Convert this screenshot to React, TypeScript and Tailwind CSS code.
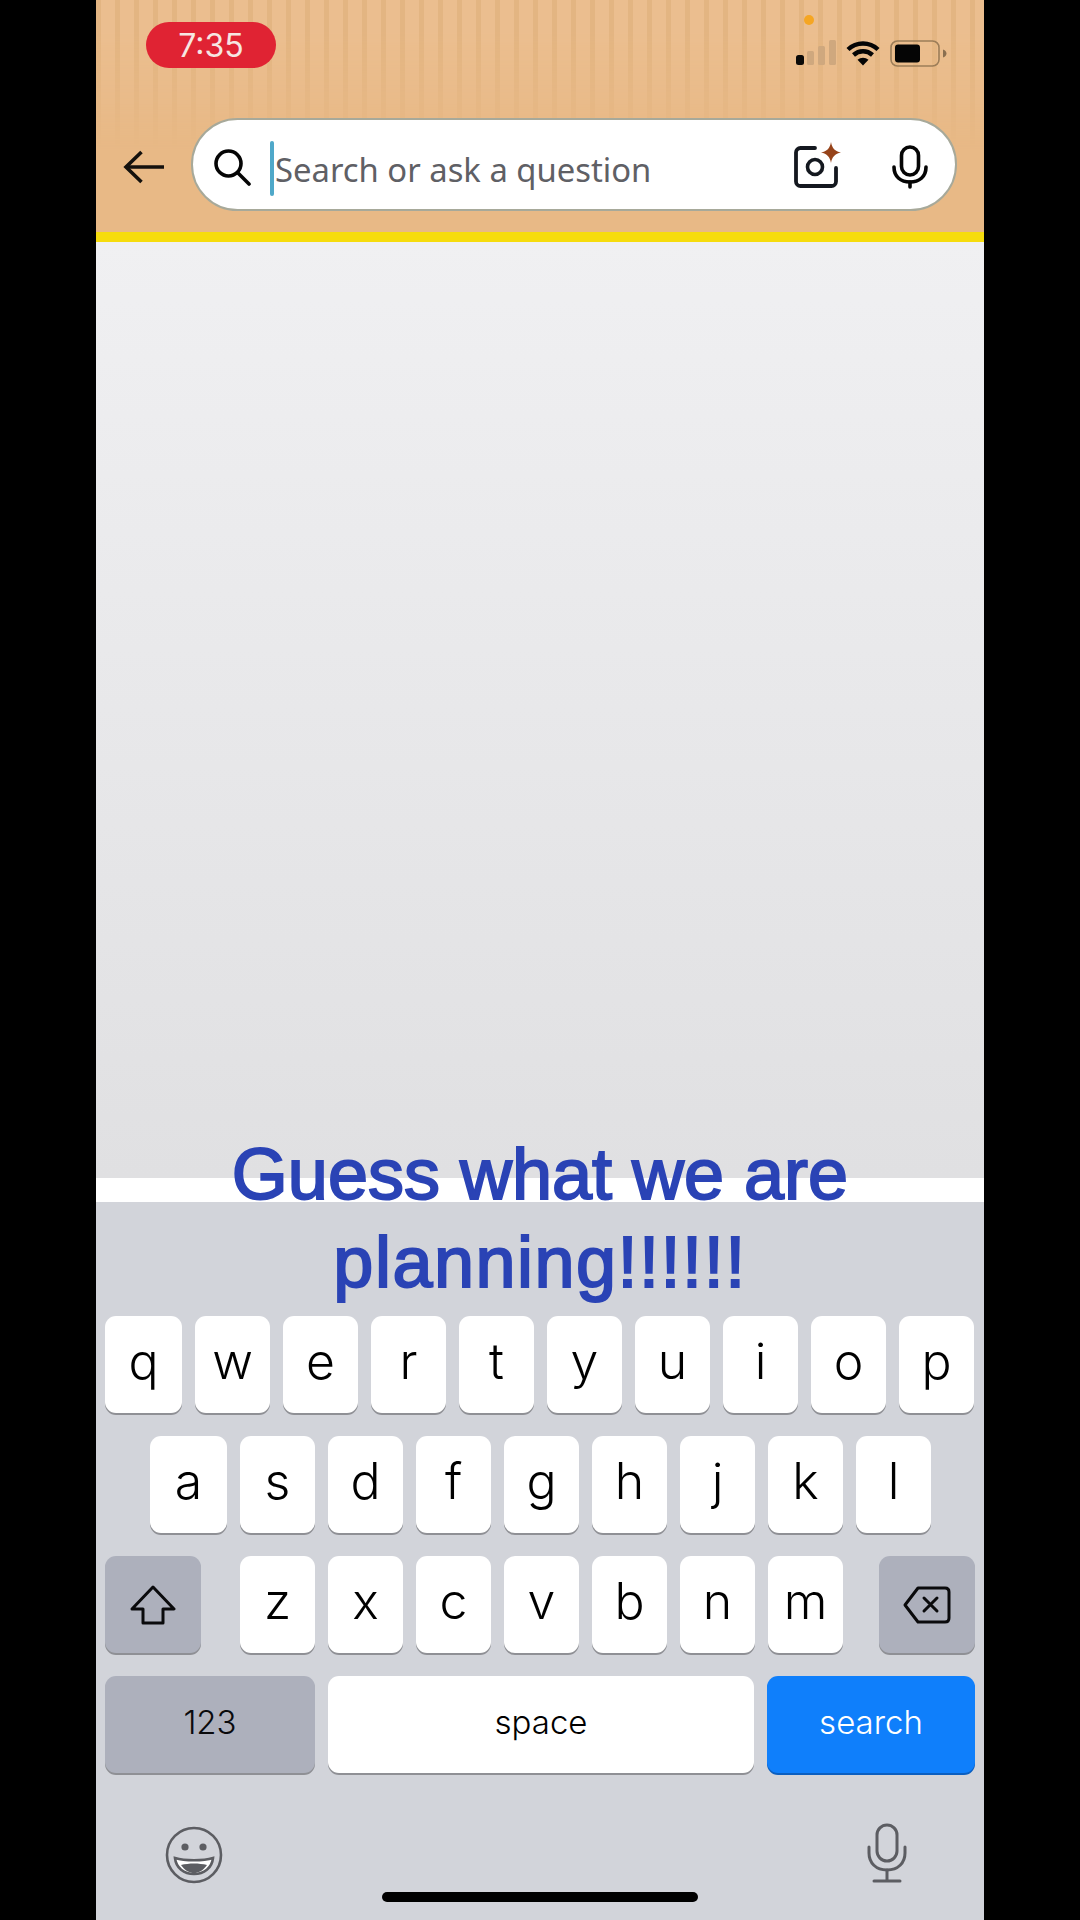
const rowOne = ["q", "w", "e", "r", "t", "y", "u", "i", "o", "p"];
const rowTwo = ["a", "s", "d", "f", "g", "h", "j", "k", "l"];
const rowThree = ["z", "x", "c", "v", "b", "n", "m"];

function LetterKey({ label }: { label: string }) {
    return (
        <div className="flex h-[97px] w-[75px] items-center justify-center rounded-[11px] bg-white pb-[7px] font-['Inter',sans-serif] text-[50px] font-light text-black shadow-[0_2px_0_#8f9095]">
            {label}
        </div>
    );
}

function StatusIcons() {
    return (
        <div className="mt-[40px] flex h-[27px] items-start">
            <svg width="40" height="26" viewBox="0 0 40 26">
                <rect x="0" y="15" width="8" height="10" rx="2.5" fill="#0b0a08" />
                <rect x="11" y="11" width="7" height="14" rx="1.5" fill="#cfa87e" />
                <rect x="22" y="6" width="7" height="19" rx="1.5" fill="#cfa87e" />
                <rect x="33" y="0" width="7" height="25" rx="1.5" fill="#cfa87e" />
            </svg>
            <svg className="ml-[10px]" width="34" height="26" viewBox="0 0 34 26" fill="none" stroke="#050505" strokeWidth="4.4">
                <path d="M2 9.5C10.5 1.5 23.5 1.5 32 9.5" />
                <path d="M7.5 15C13 10 21 10 26.5 15" />
                <path d="M17 25.5L11.5 19.8C14.8 17 19.2 17 22.5 19.8Z" fill="#050505" stroke="none" />
            </svg>
            <svg className="ml-[10px]" width="57" height="27" viewBox="0 0 57 27">
                <rect x="1" y="1" width="48" height="25" rx="6.5" fill="none" stroke="#9c7d58" strokeWidth="1.6" />
                <rect x="5" y="4.5" width="25" height="18" rx="3" fill="#050505" />
                <path d="M53 9.5C55.5 10.5 56.5 12 56.5 13.5C56.5 15 55.5 16.5 53 17.5Z" fill="#8a6f50" />
            </svg>
        </div>
    );
}

function SearchBar() {
    return (
        <div className="ml-[27px] flex h-[93px] w-[766px] items-center rounded-full border-2 border-[#a7a99a] bg-white">
            <svg className="ml-[20px] mt-[4px]" width="38" height="38" viewBox="0 0 38 38" fill="none" stroke="#050505" strokeWidth="3.6" strokeLinecap="round">
                <circle cx="15.5" cy="15.5" r="12.5" />
                <path d="M25 25L36 36" />
            </svg>
            <div className="ml-[19px] mt-[8px] h-[55px] w-[4px] rounded-full bg-[#4fa8c9]" />
            <span className="ml-[1px] pt-[11px] font-['Noto_Sans',sans-serif] text-[32.8px] leading-none text-[#5f6065]">
                Search or ask a question
            </span>
            <svg className="ml-auto" width="48" height="48" viewBox="0 0 48 48" fill="none">
                <path d="M21 7H6.5C4 7 2 9 2 11.5V40.5C2 43 4 45 6.5 45H37.5C40 45 42 43 42 40.5V27" stroke="#14181f" strokeWidth="3.8" strokeLinecap="round" />
                <circle cx="21" cy="26" r="7.5" stroke="#14181f" strokeWidth="3.6" />
                <path d="M37 1C38 7 41 10.5 47 11.5C41 12.5 38 16 37 22C36 16 33 12.5 27 11.5C33 10.5 36 7 37 1Z" fill="#96431a" />
            </svg>
            <svg className="ml-[50px] mr-[27px] mt-[4px]" width="36" height="44" viewBox="0 0 36 44" fill="none" stroke="#050505" strokeWidth="3.6" strokeLinecap="round">
                <rect x="9.5" y="2" width="17" height="28" rx="8.5" />
                <path d="M2 22C2 32 9 37 18 37C27 37 34 32 34 22" />
                <path d="M18 37V42" />
            </svg>
        </div>
    );
}

export default function App() {
    return (
        <div className="flex h-[1920px] w-[1080px] justify-center overflow-hidden bg-black font-['Liberation_Sans',sans-serif]">
            <div className="relative flex w-[888px] flex-col">
                <header className="relative h-[232px] bg-[#e8b986]">
                    {/* cardboard stripes fade out toward the search bar */}
                    <div className="absolute inset-x-0 top-0 h-[150px] bg-[repeating-linear-gradient(90deg,#e3b582_0px,#e3b582_5px,#ebbe8f_5px,#ebbe8f_19px)] [mask-image:linear-gradient(to_bottom,black_20%,transparent)]" />
                    <div className="absolute left-[708px] top-[15px] h-[10px] w-[10px] rounded-full bg-[#f5a623]" />
                    <div className="relative flex h-[118px] justify-between pl-[50px] pr-[37px]">
                        <div className="mt-[22px] flex h-[46px] w-[130px] items-center justify-center rounded-full bg-[#e02333] pt-[1px] font-['Inter',sans-serif] text-[32px] text-[#f6e6e2]">
                            7:35
                        </div>
                        <StatusIcons />
                    </div>
                    <div className="relative flex items-center pl-[27px]">
                        <svg className="mt-[5px]" width="41" height="34" viewBox="0 0 41 34" fill="none" stroke="#14110d" strokeWidth="3.6">
                            <path d="M41 17H3" />
                            <path d="M18.5 2L3 17L18.5 32" />
                        </svg>
                        <SearchBar />
                    </div>
                </header>
                <div className="h-[10px] bg-[#f6dc0d]" />
                <main className="h-[936px] bg-linear-to-b from-[#f0f0f2] to-[#e0e0e2]" />
                <div className="h-[24px] bg-white" />
                <section className="relative flex flex-1 flex-col gap-[23px] bg-[#d2d4da] px-[9px] pt-[114px]">
                    <div className="flex gap-[13px] [&>*:first-child]:w-[77px]">
                        {rowOne.map((letter) => (
                            <LetterKey key={letter} label={letter} />
                        ))}
                    </div>
                    <div className="ml-[45px] flex gap-[13px] [&>*:first-child]:w-[77px]">
                        {rowTwo.map((letter) => (
                            <LetterKey key={letter} label={letter} />
                        ))}
                    </div>
                    <div className="flex">
                        <div className="flex h-[97px] w-[96px] items-center justify-center rounded-[11px] bg-[#adb0bc] shadow-[0_2px_0_#8f9095]">
                            <svg width="46" height="40" viewBox="0 0 46 40" fill="none" stroke="#0a0a0c" strokeWidth="3" strokeLinejoin="round">
                                <path d="M23 2L44 24H33V38H13V24H2Z" />
                            </svg>
                        </div>
                        <div className="ml-[39px] flex gap-[13px]">
                            {rowThree.map((letter) => (
                                <LetterKey key={letter} label={letter} />
                            ))}
                        </div>
                        <div className="ml-auto flex h-[97px] w-[96px] items-center justify-center rounded-[11px] bg-[#adb0bc] shadow-[0_2px_0_#8f9095]">
                            <svg width="48" height="38" viewBox="0 0 48 38" fill="none" stroke="#0a0a0c" strokeWidth="3" strokeLinejoin="round">
                                <path d="M15 2H42C44.5 2 46 3.5 46 6V32C46 34.5 44.5 36 42 36H15L2 19Z" />
                                <path d="M21 12L34 25M34 12L21 25" strokeLinecap="round" />
                            </svg>
                        </div>
                    </div>
                    <div className="flex justify-between">
                        <div className="flex h-[97px] w-[210px] items-center justify-center rounded-[11px] bg-[#adb0bc] pb-[3px] font-['Inter',sans-serif] text-[33px] font-light text-[#0a0a0c] shadow-[0_2px_0_#8f9095]">
                            123
                        </div>
                        <div className="flex h-[97px] w-[426px] items-center justify-center rounded-[11px] bg-white pb-[4px] font-['Inter',sans-serif] text-[33px] font-light text-black shadow-[0_2px_0_#8f9095]">
                            space
                        </div>
                        <div className="flex h-[97px] w-[208px] items-center justify-center rounded-[11px] bg-[#0f7ffb] pb-[4px] font-['Inter',sans-serif] text-[33px] font-light text-white shadow-[0_2px_0_#0b5fc0]">
                            search
                        </div>
                    </div>
                    <div className="mt-[30px] flex items-start justify-between pl-[60px] pr-[68px]">
                        <svg width="58" height="58" viewBox="0 0 58 58" fill="none" stroke="#5c5d62" strokeWidth="2.6">
                            <circle cx="29" cy="29" r="27" />
                            <circle cx="20" cy="21" r="3.6" fill="#5c5d62" stroke="none" />
                            <circle cx="38" cy="21" r="3.6" fill="#5c5d62" stroke="none" />
                            <path d="M10 32C20 35 38 35 48 32C47 42 39 48 29 48C19 48 11 42 10 32Z" fill="#fff" />
                            <path d="M16 39C24 37 34 37 42 39C38 45 33 47 29 47C25 47 20 45 16 39Z" fill="#5c5d62" stroke="none" />
                        </svg>
                        <svg className="-mt-[3px]" width="40" height="60" viewBox="0 0 40 60" fill="none" stroke="#5c5d62" strokeWidth="3" strokeLinecap="round">
                            <rect x="10" y="2" width="20" height="36" rx="10" />
                            <path d="M2 24V30C2 40 9 47 20 47C31 47 38 40 38 30V24" />
                            <path d="M20 47V57M7 58H33" />
                        </svg>
                    </div>
                    {/* home indicator */}
                    <div className="absolute left-[286px] top-[690px] h-[10px] w-[316px] rounded-full bg-black" />
                </section>
                {/* caption laid over the video */}
                <div className="absolute inset-x-0 top-[1130px] text-center text-[72px] leading-[88px] text-[#2a43b5] [-webkit-text-stroke:2px_#2a43b5]">
                    <span>Guess what we are</span>
                    <br />
                    <span className="tracking-[1.5px]">planning!!!!!!</span>
                </div>
            </div>
        </div>
    );
}
